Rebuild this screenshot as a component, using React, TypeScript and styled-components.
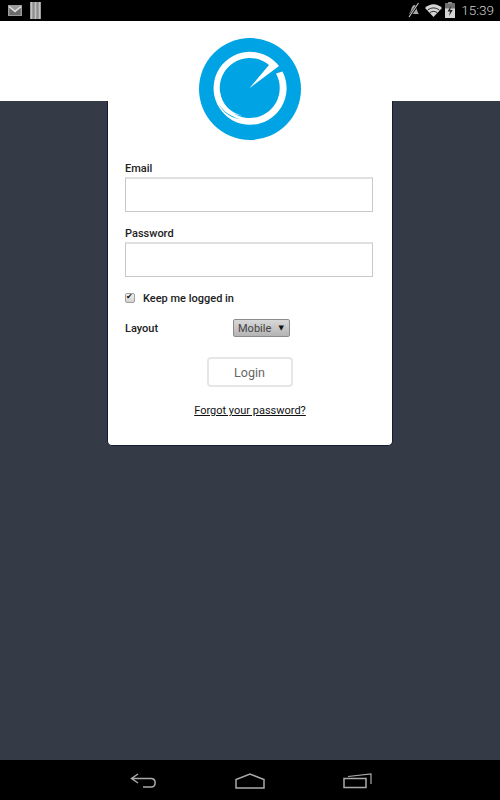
import React from 'react'
import styled, { createGlobalStyle } from 'styled-components'

const GlobalStyle = createGlobalStyle`
	html, body {
		margin: 0;
		padding: 0;
		background: #000;
	}
	* {
		box-sizing: border-box;
	}
`

const GmailIcon = () => (
	<svg width="14" height="11" viewBox="0 0 14 11">
		<rect width="14" height="11" fill="#9a9a9a" />
		<path d="M1.5 2 L7 6.5 L12.5 2 V10 H1.5 Z" fill="#6a6a6a" />
		<path d="M1 1.5 L7 6.5 L13 1.5" fill="none" stroke="#e2e2e2" strokeWidth="1.5" />
	</svg>
)

const BarsIcon = () => (
	<svg width="11" height="17" viewBox="0 0 11 17">
		<rect width="11" height="17" fill="#8f8f8f" />
		<path d="M1.5 0 V17 M5.5 0 V17 M9.5 0 V17" stroke="#c4c4c4" strokeWidth="1.6" />
	</svg>
)

const MuteIcon = () => (
	<svg width="12" height="16" viewBox="0 0 12 16">
		<path d="M1 12 C3 10 3 7 4 5 C5 3 7 2 8 4 C9 6 8.5 9 11 12 Z" fill="#a8a8a8" />
		<path d="M11 1 L1 15" stroke="#000" strokeWidth="2.4" />
		<path d="M10.5 1 L1 15" stroke="#c8c8c8" strokeWidth="1.1" />
	</svg>
)

const WifiIcon = () => (
	<svg width="17" height="13" viewBox="0 0 17 13">
		<path d="M0 4 C5 -1 12 -1 17 4 L8.5 13 Z" fill="#d4d4d4" />
		<path d="M2.6 6.2 C6 3.2 11 3.2 14.4 6.2 M5 8.6 C7 7 10 7 12 8.6" stroke="#000" strokeWidth="0.8" fill="none" />
	</svg>
)

const BatteryIcon = () => (
	<svg width="10" height="16" viewBox="0 0 10 16">
		<rect x="3" width="4" height="2" fill="#8c8c8c" />
		<rect y="1.5" width="10" height="14.5" fill="#d6d6d6" />
		<rect y="1.5" width="10" height="5" fill="#6f6f6f" />
		<path d="M6 4 L2.5 9.5 H5 L4 14 L7.8 8 H5.2 Z" fill="#222" />
	</svg>
)

const Logo = () => (
	<svg width="102" height="102" viewBox="0 0 102 102">
		<circle cx="51" cy="51" r="51" fill="#00a4e4" />
		{/* ring with the needle running in to the centre */}
		<path
			fill="#fff"
			d="M83.5 33.5 A36.5 36.5 0 1 1 80 28 L50.3 50.3 L70 27 A30 30 0 1 0 77 35.5 Z"
		/>
		{/* tail inside the lower left of the ring */}
		<path fill="#fff" d="M21 54 C22 65 31 75 43 77.5 C32 77 24 71 20 60 Z" />
		<path fill="#00a4e4" d="M17.5 60 C20 70 29 78 41 81 C30 80 21 72 17.5 60 Z" />
	</svg>
)

const BackIcon = () => (
	<svg width="27" height="16" viewBox="0 0 27 16">
		<path d="M8 1 L1.5 5.5 L8 10 M1.5 5.5 H21 C26.5 5.5 26.5 14 21 14 H13" fill="none" stroke="#aaa" strokeWidth="1.5" />
	</svg>
)

const HomeIcon = () => (
	<svg width="30" height="16" viewBox="0 0 30 16">
		<path d="M1 15 V6.5 L15 1 L29 6.5 V15 Z" fill="none" stroke="#aaa" strokeWidth="1.5" />
	</svg>
)

const RecentIcon = () => (
	<svg width="29" height="16" viewBox="0 0 29 16">
		<rect x="1" y="5.5" width="22" height="9" fill="none" stroke="#aaa" strokeWidth="1.5" />
		<path d="M5 3.5 L28 1 V11" fill="none" stroke="#aaa" strokeWidth="1.2" />
	</svg>
)

export default function App() {
	return (
		<>
			<GlobalStyle />
			<Screen>
				<StatusBar>
					<NotificationIcons>
						<GmailIcon />
						<BarsIcon />
					</NotificationIcons>
					<SystemIcons>
						<MuteIcon />
						<WifiIcon />
						<BatteryIcon />
						<Clock>15:39</Clock>
					</SystemIcons>
				</StatusBar>
				<Header>
					<Logo />
				</Header>
				<Main>
					<Card>
						<Label htmlFor="email">Email</Label>
						<TextInput id="email" type="text" />
						<Label htmlFor="password">Password</Label>
						<TextInput id="password" type="password" />
						<CheckRow>
							<Check type="checkbox" defaultChecked />
							<CheckText>Keep me logged in</CheckText>
						</CheckRow>
						<LayoutRow>
							<LayoutLabel>Layout</LayoutLabel>
							<FakeSelect>
								<span>Mobile</span>
								<Arrow>▼</Arrow>
							</FakeSelect>
						</LayoutRow>
						<LoginButton type="button">Login</LoginButton>
						<ForgotLink href="#">Forgot your password?</ForgotLink>
					</Card>
				</Main>
				<NavBar>
					<BackIcon />
					<HomeIcon />
					<RecentIcon />
				</NavBar>
			</Screen>
		</>
	)
}

const Screen = styled.div`
	display: flex;
	flex-direction: column;
	width: 500px;
	height: 800px;
	overflow: hidden;
	font-family: Roboto, 'Liberation Sans', sans-serif;
`

const StatusBar = styled.div`
	display: flex;
	align-items: center;
	justify-content: space-between;
	height: 21px;
	padding: 0 6px 1px 8px;
	background: #000;
`

const NotificationIcons = styled.div`
	display: flex;
	align-items: center;
	gap: 8px;
`

const SystemIcons = styled.div`
	display: flex;
	align-items: center;
	gap: 3px;

	& > svg:first-child {
		margin-right: 2px;
	}
`

const Clock = styled.span`
	margin-left: 3px;
	font-size: 13.5px;
	font-weight: 300;
	color: #cfcfcf;
`

const Header = styled.header`
	display: flex;
	justify-content: center;
	height: 80px;
	padding-top: 17px;
	background: #fff;
	position: relative;
	z-index: 1;

	& > svg {
		flex: none;
	}
`

const Main = styled.main`
	flex: 1;
	background: #343b47;
`

const Card = styled.div`
	display: flex;
	flex-direction: column;
	width: 286px;
	height: 345px;
	margin: 0 auto;
	padding: 60px 18px 0 17px;
	background: #fff;
	border: 1px solid #161b35;
	border-top: none;
	border-radius: 0 0 5px 5px;
`

const Label = styled.label`
	font-size: 11px;
	font-weight: 500;
	line-height: 16px;
	color: #222;
`

const TextInput = styled.input`
	display: block;
	width: 248px;
	height: 35px;
	margin: 0 0 14px;
	padding: 4px;
	background: #fff;
	border: 1px solid #c8c8c8;
	border-top: 2px solid #e0e0e0;
	outline: none;
`

const CheckRow = styled.label`
	display: flex;
	align-items: center;
	gap: 8px;
	height: 14px;
`

const Check = styled.input`
	position: relative;
	width: 10px;
	height: 10px;
	margin: 0;
	appearance: none;
	background: linear-gradient(#f2f2f2, #d2d2d2);
	border: 1px solid #a0a0a0;
	border-radius: 2px;

	&:checked::after {
		content: '✔';
		position: absolute;
		top: -2px;
		left: 0;
		font-size: 8px;
		line-height: 10px;
		color: #111;
	}
`

const CheckText = styled.span`
	font-size: 11px;
	font-weight: 500;
	color: #222;
`

const LayoutRow = styled.div`
	display: flex;
	align-items: center;
	height: 18px;
	margin-top: 14px;
`

const LayoutLabel = styled.span`
	width: 108px;
	font-size: 11px;
	font-weight: 500;
	color: #222;
`

const FakeSelect = styled.div`
	display: flex;
	align-items: center;
	justify-content: space-between;
	width: 57px;
	height: 18px;
	padding: 0 5px 0 4px;
	font-size: 11px;
	color: #444;
	background: linear-gradient(#d8d8d8, #b4b4b4);
	border: 1px solid #8c8c8c;
	border-radius: 2px;
`

const Arrow = styled.span`
	font-family: 'DejaVu Sans', sans-serif;
	font-size: 7px;
	color: #111;
`

const LoginButton = styled.button`
	align-self: center;
	width: 86px;
	height: 30px;
	margin-top: 20px;
	font-family: inherit;
	font-size: 12.5px;
	color: #666;
	background: #fff;
	border: 2px solid #e6e6e6;
	border-radius: 4px;
`

const ForgotLink = styled.a`
	align-self: center;
	margin: 17px 0 0 1px;
	font-size: 11px;
	line-height: 14px;
	color: #111;
	text-decoration: underline;
`

const NavBar = styled.nav`
	display: flex;
	align-items: center;
	gap: 78px;
	height: 40px;
	padding: 1px 0 0 130px;
	background: #000;
`
